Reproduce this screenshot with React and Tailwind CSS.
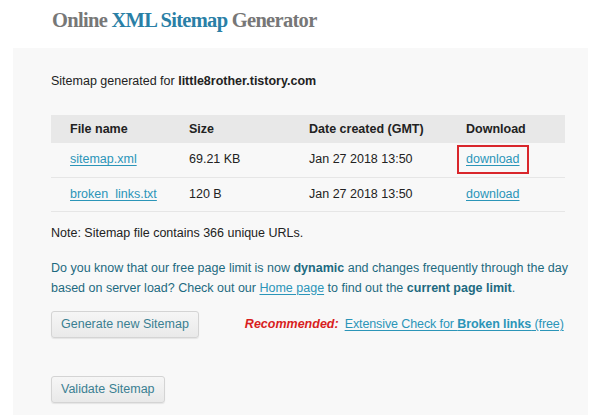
import React from 'react';

const rows = [
  { name: 'sitemap.xml', size: '69.21 KB', date: 'Jan 27 2018 13:50', boxed: true },
  { name: 'broken_links.txt', size: '120 B', date: 'Jan 27 2018 13:50', boxed: false },
];

const linkCls = 'text-[#2b95b8] underline underline-offset-2';
const btnCls =
  'h-[27px] px-[9px] whitespace-nowrap rounded-[3px] border border-[#d4d4d4] bg-gradient-to-b from-[#f6f6f6] to-[#e9e9e9] text-[#3a7f92] shadow-[0_1px_1px_rgba(0,0,0,0.08)]';

const App = () => {
  return (
    <div className="w-[600px] h-[415px] bg-white overflow-hidden font-['Liberation_Sans',Arial,sans-serif] text-[12.5px] text-[#222]">
      {/* Title */}
      <h1 className="pl-[52px] pt-[6px] h-[48px] font-['Liberation_Serif',serif] font-bold text-[20.5px] tracking-[-0.7px] leading-[28px] text-[#777]">
        Online <span className="text-[#2a7fa6]">XML Sitemap</span> Generator
      </h1>

      {/* Panel */}
      <div className="ml-[13px] w-[575px] h-[367px] bg-[#f8f8f8] px-[38px] pt-[25px]">
        <p className="leading-[16px]">
          Sitemap generated for <b>little8rother.tistory.com</b>
        </p>

        <table className="mt-[26px] w-[514px] border-collapse">
          <thead>
            <tr className="bg-[#e8e8e8] h-[28px] text-left">
              <th className="pl-[19px] w-[138px] font-bold">File name</th>
              <th className="w-[120px] font-bold">Size</th>
              <th className="w-[157px] font-bold">Date created (GMT)</th>
              <th className="font-bold">Download</th>
            </tr>
          </thead>
          <tbody>
            {rows.map((r) => (
              <tr key={r.name} className="h-[34px] border-b border-[#e6e6e6]">
                <td className="pl-[19px]">
                  <a className={linkCls}>{r.name}</a>
                </td>
                <td>{r.size}</td>
                <td>{r.date}</td>
                <td>
                  <span
                    className={
                      'inline-block -ml-[9px] px-[7px] py-[3px] border-2 ' +
                      (r.boxed ? 'border-[#d9262b]' : 'border-transparent')
                    }
                  >
                    <a className={linkCls}>download</a>
                  </span>
                </td>
              </tr>
            ))}
          </tbody>
        </table>

        <p className="mt-[13px] leading-[16px]">Note: Sitemap file contains 366 unique URLs.</p>

        <p className="mt-[17px] w-[530px] leading-[20px] text-[#1d6a80]">
          Do you know that our free page limit is now <b>dynamic</b> and changes frequently through the day
          based on server load? Check out our <a className={linkCls}>Home page</a> to find out the{' '}
          <b>current page limit</b>.
        </p>

        <div className="mt-[13px] flex items-center">
          <button className={btnCls}>Generate new Sitemap</button>
          <span className="ml-[46px] text-[#d81e1e] font-bold italic">Recommended:</span>
          <a className={linkCls + ' ml-[6px] whitespace-nowrap tracking-[-0.1px]'}>
            Extensive Check for <b>Broken links</b> (free)
          </a>
        </div>

        <button className={btnCls + ' mt-[38px]'}>Validate Sitemap</button>
      </div>
    </div>
  );
};

export default App;
